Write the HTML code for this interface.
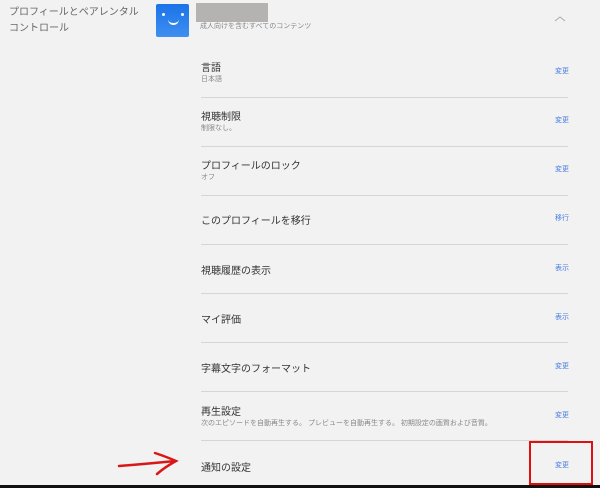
<!DOCTYPE html>
<html><head><meta charset="utf-8"><style>
body{margin:0;width:600px;height:488px;background:#f2f2f2;font-family:"Liberation Sans","Noto Sans CJK JP",sans-serif;position:relative;overflow:hidden}
.a{position:absolute;white-space:nowrap}
.t{font-size:10px;color:#333}
.s{font-size:7px;color:#888}
.l{font-size:7px;color:#4a7fe0}
.d{position:absolute;left:201px;width:367px;height:1px;background:#d6d6d6}
</style></head><body>
<div class="a" style="left:9px;top:5px;font-size:10px;line-height:16px;color:#666">プロフィールとペアレンタル<br>コントロール</div>
<div class="a" style="left:156px;top:4px;width:33px;height:33px;border-radius:2px;background:linear-gradient(#1a73e8,#3f8ff0)"></div>
<div class="a" style="left:162px;top:13px;width:3px;height:3px;background:#fff;border-radius:50%"></div>
<div class="a" style="left:181px;top:13px;width:3px;height:3px;background:#fff;border-radius:50%"></div>
<div class="a" style="left:168px;top:17px;width:11px;height:6px;border-bottom:2px solid #fff;border-radius:0 0 6px 6px"></div>
<div class="a" style="left:196px;top:3px;width:72px;height:19px;background:#b5b2b2"></div>
<div class="a s" style="left:200px;top:21px">成人向けを含むすべてのコンテンツ</div>
<svg class="a" style="left:554px;top:15px" width="12" height="8"><path d="M1 6 L6 2 L11 6" stroke="#aaa" fill="none" stroke-width="1"/></svg>

<div class="a t" style="left:201px;top:59px">言語</div><div class="a s" style="left:201px;top:74px">日本語</div><div class="a l" style="left:555px;top:66px">変更</div>
<div class="d" style="top:97px"></div>
<div class="a t" style="left:201px;top:108px">視聴制限</div><div class="a s" style="left:201px;top:123px">制限なし。</div><div class="a l" style="left:555px;top:115px">変更</div>
<div class="d" style="top:146px"></div>
<div class="a t" style="left:201px;top:157px">プロフィールのロック</div><div class="a s" style="left:201px;top:172px">オフ</div><div class="a l" style="left:555px;top:164px">変更</div>
<div class="d" style="top:195px"></div>
<div class="a t" style="left:201px;top:212px">このプロフィールを移行</div><div class="a l" style="left:555px;top:213px">移行</div>
<div class="d" style="top:244px"></div>
<div class="a t" style="left:201px;top:262px">視聴履歴の表示</div><div class="a l" style="left:555px;top:263px">表示</div>
<div class="d" style="top:293px"></div>
<div class="a t" style="left:201px;top:311px">マイ評価</div><div class="a l" style="left:555px;top:312px">表示</div>
<div class="d" style="top:342px"></div>
<div class="a t" style="left:201px;top:360px">字幕文字のフォーマット</div><div class="a l" style="left:555px;top:361px">変更</div>
<div class="d" style="top:391px"></div>
<div class="a t" style="left:201px;top:403px">再生設定</div><div class="a s" style="left:201px;top:418px">次のエピソードを自動再生する。 プレビューを自動再生する。 初期設定の画質および音質。</div><div class="a l" style="left:555px;top:410px">変更</div>
<div class="d" style="top:440px"></div>
<div class="a t" style="left:201px;top:459px">通知の設定</div><div class="a l" style="left:555px;top:460px">変更</div>
<div class="a" style="left:529px;top:441px;width:60px;height:40px;border:2px solid #e01010"></div>
<svg class="a" style="left:115px;top:450px" width="65" height="28"><path d="M4 16 Q30 14 60 11 M40 3 Q52 7 61 11 Q50 17 42 24" stroke="#d81818" fill="none" stroke-width="2.5" stroke-linecap="round"/></svg>
<div class="a" style="left:0;top:485px;width:600px;height:3px;background:#111"></div>
</body></html>
